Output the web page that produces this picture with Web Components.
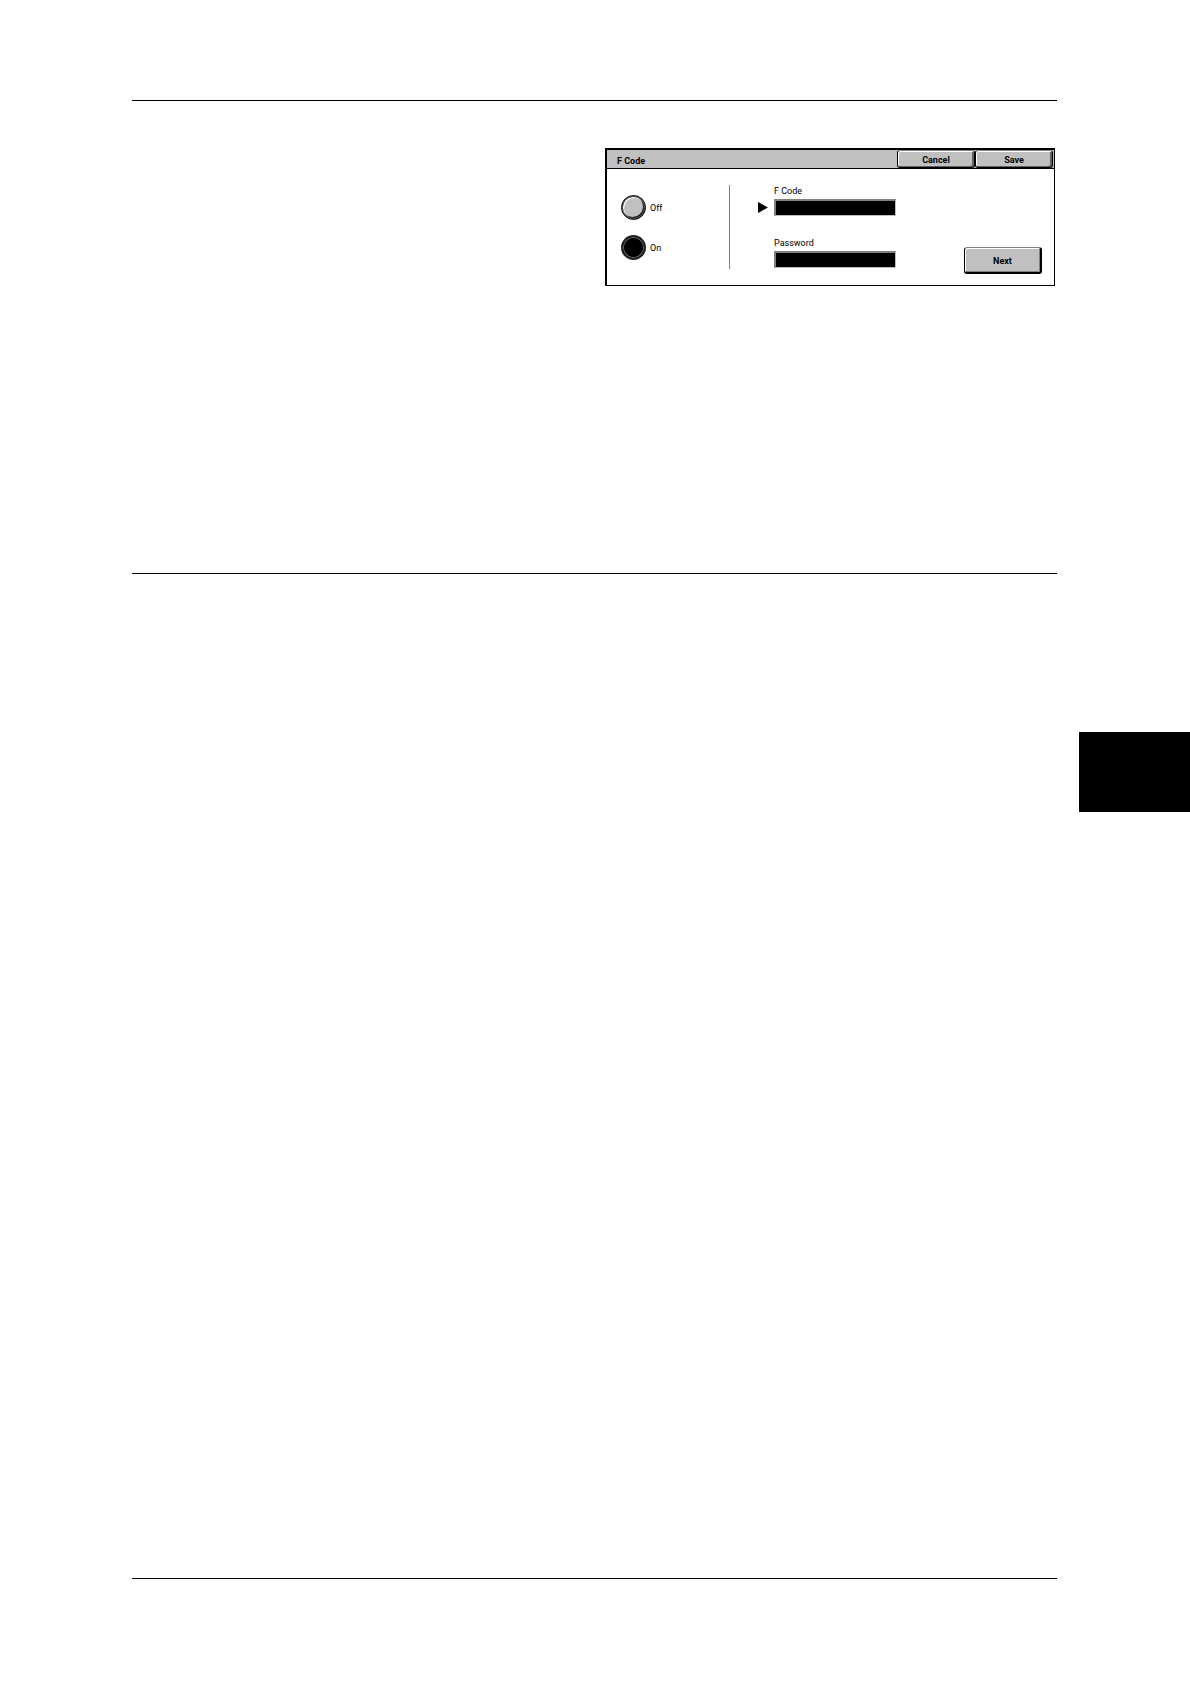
<!DOCTYPE html>
<html lang="en">
<head>
<meta charset="UTF-8">
<meta name="viewport" content="width=device-width, initial-scale=1">
<title>F Code</title>
<style>
  body {
    margin: 0;
    background: #fff;
    color: #000;
    font: 9px/12px Roboto, "Liberation Sans", sans-serif;
  }
</style>
</head>
<body>
<manual-page>
  <touch-panel heading="F Code">
    <panel-button slot="actions">Cancel</panel-button>
    <panel-button slot="actions">Save</panel-button>
    <option-list name="fcode" options="Off,On" selected="On"></option-list>
    <entry-field label="F Code" current></entry-field>
    <entry-field label="Password"></entry-field>
    <panel-button slot="next" large>Next</panel-button>
  </touch-panel>
</manual-page>

<script>
// page frame: three rules and the chapter thumb at the right edge
class ManualPage extends HTMLElement {
  constructor() {
    super();
    this.attachShadow({ mode: 'open' });
    this.shadowRoot.innerHTML = `
      <style>
        :host {
          display: grid;
          grid-template-columns: 132px 1fr 22px 111px;
          min-height: 100vh;
          box-sizing: border-box;
          padding: 100px 0 105px;
        }
        main {
          grid-column: 2;
          display: flex;
          flex-direction: column;
          border-top: 1px solid #000;
          border-bottom: 1px solid #000;
        }
        section {
          display: grid;
          grid-template-columns: 473fr 450fr;
          align-items: start;
          min-height: 425px;
          padding: 47px 2px 0 0;
          border-bottom: 1px solid #000;
        }
        ::slotted(*) {
          grid-column: 2;
        }
        .thumb {
          grid-column: 4;
          height: 80px;
          margin-top: 632px;
          background: #000;
        }
      </style>
      <main>
        <section><slot></slot></section>
      </main>
      <div class="thumb"></div>
    `;
  }
}

class TouchPanel extends HTMLElement {
  constructor() {
    super();
    this.attachShadow({ mode: 'open' });
  }

  connectedCallback() {
    this.shadowRoot.innerHTML = `
      <style>
        :host {
          display: block;
          border: solid #000;
          border-width: 2px 1px 1px 2px;
        }
        header {
          display: flex;
          align-items: center;
          height: 18px;
          padding-right: 1px;
          background: #c0c0c0;
          border-bottom: 1px solid #000;
        }
        h1 {
          flex: 1;
          margin: 0;
          padding: 4px 0 0 10px;
          font: inherit;
          font-weight: bold;
        }
        .body {
          display: flex;
          box-sizing: border-box;
          min-height: 116px;
          padding: 16px 12px 11px 14px;
        }
        .choices {
          width: 108px;
          padding-top: 10px;
        }
        .divider {
          width: 1px;
          margin: 0 28px 5px 0;
          background: #808080;
        }
        .fields {
          display: flex;
          flex-direction: column;
          gap: 21px;
        }
        .next {
          margin-left: auto;
          align-self: flex-end;
        }
      </style>
      <header>
        <h1>${this.getAttribute('heading')}</h1>
        <slot name="actions"></slot>
      </header>
      <div class="body">
        <div class="choices"><slot name="choices"></slot></div>
        <div class="divider"></div>
        <div class="fields"><slot></slot></div>
        <div class="next"><slot name="next"></slot></div>
      </div>
    `;
  }
}

class PanelButton extends HTMLElement {
  constructor() {
    super();
    this.attachShadow({ mode: 'open' });
    this.shadowRoot.innerHTML = `
      <style>
        :host {
          display: block;
          width: 78px;
          height: 18px;
        }
        :host([large]) {
          height: 27px;
        }
        button {
          display: block;
          box-sizing: border-box;
          width: 100%;
          height: 100%;
          padding: 2px 0 0;
          border: 1px solid #000;
          border-top-color: #808080;
          border-radius: 3px;
          background: #c0c0c0;
          box-shadow: inset 1px 1px #fff, inset -2px -1px #606060;
          color: inherit;
          font: inherit;
          font-weight: bold;
        }
        :host([large]) button {
          border-bottom-width: 2px;
          border-right-width: 2px;
          box-shadow: inset 1px 1px #fff, inset -1px -1px #808080;
        }
      </style>
      <button type="button"><slot></slot></button>
    `;
  }
}

class OptionList extends HTMLElement {
  constructor() {
    super();
    this.attachShadow({ mode: 'open' });
  }

  connectedCallback() {
    this.slot = 'choices';
    const name = this.getAttribute('name');
    const selected = this.getAttribute('selected');
    const rows = this.getAttribute('options').split(',').map(option => `
      <label>
        <input type="radio" name="${name}" value="${option}" ${option === selected ? 'checked' : ''}>
        <span>${option}</span>
      </label>
    `).join('');

    this.shadowRoot.innerHTML = `
      <style>
        :host {
          display: flex;
          flex-direction: column;
          gap: 15px;
        }
        label {
          display: flex;
          align-items: center;
          gap: 4px;
        }
        input {
          appearance: none;
          box-sizing: border-box;
          width: 25px;
          height: 25px;
          margin: 0;
          border: 1px solid #000;
          border-radius: 50%;
          background: #c0c0c0;
          box-shadow: inset 0 0 0 1px #505050, inset 1px 1px 0 1px #fff, inset -1px -1px 0 1px #202020;
        }
        input:checked {
          border: 2px solid #202020;
          background: radial-gradient(circle, #000 9px, #707070 10px, #000 11px);
          box-shadow: none;
        }
      </style>
      ${rows}
    `;
  }
}

class EntryField extends HTMLElement {
  constructor() {
    super();
    this.attachShadow({ mode: 'open' });
  }

  connectedCallback() {
    this.shadowRoot.innerHTML = `
      <style>
        :host {
          display: grid;
          grid-template-columns: 10px 122px;
          column-gap: 6px;
          row-gap: 2px;
          align-items: center;
        }
        label, input {
          grid-column: 2;
        }
        svg {
          grid-area: 2 / 1;
          display: block;
          visibility: hidden;
        }
        :host([current]) svg {
          visibility: visible;
        }
        input {
          box-sizing: border-box;
          width: 100%;
          height: 17px;
          margin: 0;
          padding: 0 3px;
          border: solid;
          border-width: 2px 1px 1px 2px;
          border-color: #808080 #c0c0c0 #c0c0c0 #808080;
          border-radius: 0;
          background: #000;
          color: #fff;
          font: inherit;
        }
      </style>
      <label for="entry">${this.getAttribute('label')}</label>
      <svg width="10" height="11" viewBox="0 0 10 11" aria-hidden="true"><path d="M0 0L10 5.5L0 11Z"/></svg>
      <input id="entry" type="text">
    `;
  }
}

customElements.define('manual-page', ManualPage);
customElements.define('touch-panel', TouchPanel);
customElements.define('panel-button', PanelButton);
customElements.define('option-list', OptionList);
customElements.define('entry-field', EntryField);
</script>
</body>
</html>
